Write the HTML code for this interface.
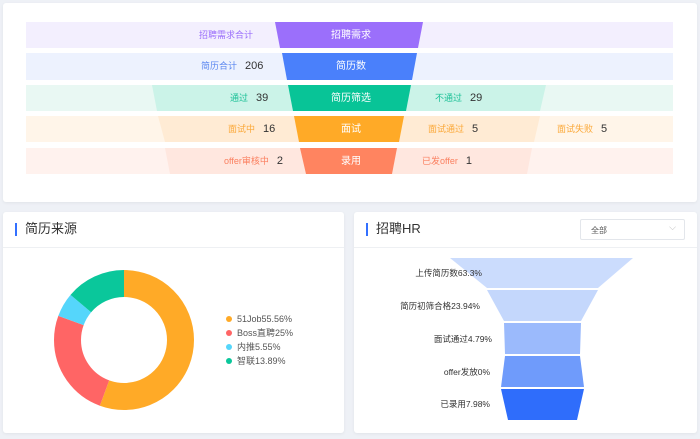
<!DOCTYPE html>
<html><head><meta charset="utf-8"><style>
body{margin:0;width:700px;height:439px;background:#eef1f6;font-family:"Liberation Sans","Noto Sans CJK SC",sans-serif;position:relative;overflow:hidden}
.card{position:absolute;background:#fff;border-radius:3px;box-shadow:0 1px 3px rgba(0,0,0,.06)}
.t{position:absolute;font-size:9px;white-space:nowrap;line-height:12px}
.n{font-size:11px;color:#333;margin-left:8px}
.hd{position:absolute;left:0;right:0;top:0;height:35px;border-bottom:1px solid #eef0f3}
.hd .bar{position:absolute;left:12px;top:11px;width:2px;height:13px;background:#3370ff}
.hd .tt{position:absolute;left:22px;top:9px;font-size:13px;color:#333;line-height:16px}
</style></head><body>
<div class="card" style="left:3px;top:3px;width:694px;height:199px"></div>
<svg style="position:absolute;left:0;top:0" width="700" height="210">
<rect x="26" y="22" width="647" height="26" fill="#f3effe"/>
<rect x="26" y="53" width="647" height="27" fill="#edf2fe"/>
<rect x="26" y="85" width="647" height="26" fill="#e9f8f3"/>
<rect x="26" y="116" width="647" height="26" fill="#fff5e9"/>
<rect x="26" y="148" width="647" height="26" fill="#fff2ee"/>
<polygon points="152,85 546,85 540,111 157,111" fill="#cbf3e8"/>
<polygon points="158,116 540,116 534,142 165,142" fill="#ffebd4"/>
<polygon points="165,148 532,148 527,174 170,174" fill="#ffe7df"/>
<polygon points="275,22 423,22 418,48 280,48" fill="#9b6ffb"/>
<polygon points="282,53 417,53 412,80 287,80" fill="#4a80fb"/>
<polygon points="288,85 411,85 406,111 293,111" fill="#08c497"/>
<polygon points="294,116 404,116 399,142 299,142" fill="#ffaa27"/>
<polygon points="300,148 397,148 392,174 306,174" fill="#ff8460"/>
</svg>
<div class="t" style="left:331px;top:30px;color:#fff;font-size:10px">招聘需求</div>
<div class="t" style="left:336px;top:61px;color:#fff;font-size:10px">简历数</div>
<div class="t" style="left:331px;top:93px;color:#fff;font-size:10px">简历筛选</div>
<div class="t" style="left:341px;top:124px;color:#fff;font-size:10px">面试</div>
<div class="t" style="left:341px;top:156px;color:#fff;font-size:10px">录用</div>
<div class="t" style="left:199px;top:29px;color:#9b6ffb">招聘需求合计</div>
<div class="t" style="left:201px;top:60px;color:#5b87f0">简历合计<span class="n">206</span></div>
<div class="t" style="left:230px;top:92px;color:#1cc197">通过<span class="n">39</span></div>
<div class="t" style="left:435px;top:92px;color:#1cc197">不通过<span class="n">29</span></div>
<div class="t" style="left:228px;top:123px;color:#fba93a">面试中<span class="n">16</span></div>
<div class="t" style="left:428px;top:123px;color:#fba93a">面试通过<span class="n">5</span></div>
<div class="t" style="left:557px;top:123px;color:#fba93a">面试失败<span class="n">5</span></div>
<div class="t" style="left:224px;top:155px;color:#fb8060">offer审核中<span class="n">2</span></div>
<div class="t" style="left:422px;top:155px;color:#fb8060">已发offer<span class="n">1</span></div>

<div class="card" style="left:3px;top:212px;width:341px;height:221px">
<div class="hd"><div class="bar"></div><div class="tt">简历来源</div></div></div>
<svg style="position:absolute;left:0;top:0" width="344" height="439">
<g transform="rotate(-90 124 340)" fill="none" stroke-width="27">
<circle cx="124" cy="340" r="56.5" stroke="#ffaa27" stroke-dasharray="197.2 400"/>
<circle cx="124" cy="340" r="56.5" stroke="#ff6565" stroke-dasharray="88.7 400" stroke-dashoffset="-197.2"/>
<circle cx="124" cy="340" r="56.5" stroke="#55d6fb" stroke-dasharray="19.7 400" stroke-dashoffset="-285.9"/>
<circle cx="124" cy="340" r="56.5" stroke="#0ac79b" stroke-dasharray="49.4 400" stroke-dashoffset="-305.6"/>
</g>
<circle cx="229" cy="319" r="3" fill="#ffaa27"/><circle cx="229" cy="333" r="3" fill="#ff6565"/>
<circle cx="229" cy="347" r="3" fill="#55d6fb"/><circle cx="229" cy="361" r="3" fill="#0ac79b"/>
</svg>
<div class="t" style="left:237px;top:313px;color:#555">51Job55.56%</div>
<div class="t" style="left:237px;top:327px;color:#555">Boss直聘25%</div>
<div class="t" style="left:237px;top:341px;color:#555">内推5.55%</div>
<div class="t" style="left:237px;top:355px;color:#555">智联13.89%</div>

<div class="card" style="left:354px;top:212px;width:343px;height:221px">
<div class="hd"><div class="bar"></div><div class="tt">招聘HR</div></div>
<div style="position:absolute;left:226px;top:7px;width:103px;height:19px;border:1px solid #e3e6eb;border-radius:2px;font-size:8px;color:#555"><span style="position:absolute;left:10px;top:5px">全部</span><span style="position:absolute;right:8px;top:2px;color:#bbb;font-size:9px">⌵</span></div></div>
<svg style="position:absolute;left:0;top:0" width="700" height="439">
<polygon points="450,258 633,258 598,288 487,288" fill="#cbdcfd"/>
<polygon points="487,290 598,290 581,321 504,321" fill="#c4d7fc"/>
<polygon points="504,323 581,323 580,354 505,354" fill="#9bbafc"/>
<polygon points="505,356 580,356 584,387 501,387" fill="#6f9bfb"/>
<polygon points="501,389 584,389 577,420 508,420" fill="#2f6dfb"/>
</svg>
<div class="t" style="right:218px;top:267px;color:#333;font-size:8.5px">上传简历数63.3%</div>
<div class="t" style="right:220px;top:300px;color:#333;font-size:8.5px">简历初筛合格23.94%</div>
<div class="t" style="right:208px;top:333px;color:#333;font-size:8.5px">面试通过4.79%</div>
<div class="t" style="right:210px;top:366px;color:#333;font-size:8.5px">offer发放0%</div>
<div class="t" style="right:210px;top:398px;color:#333;font-size:8.5px">已录用7.98%</div>
</body></html>
